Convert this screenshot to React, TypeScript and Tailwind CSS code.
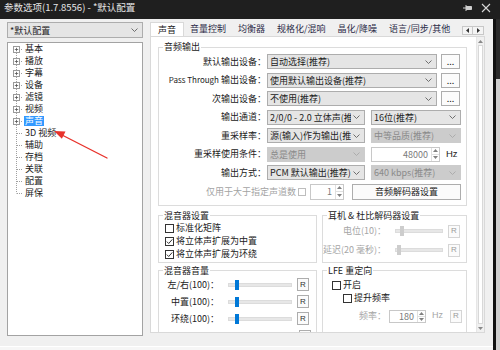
import React from 'react'

function Chevron({ off }: { off?: boolean }) {
  return (
    <svg width="7" height="4" viewBox="0 0 7 4" className="shrink-0">
      <path d="M0.5 0.5L3.5 3.5L6.5 0.5" fill="none" stroke={off ? '#a8a8a8' : '#606060'} strokeWidth="0.9" />
    </svg>
  )
}

function Select({ text, w, off }: { text: string; w: string; off?: boolean }) {
  return (
    <div className={`${w} h-[15px] shrink-0 flex items-center gap-[2px] pl-[2px] pr-[4px] border ${off ? 'bg-[#cccccc] border-[#cccccc] text-[#8a8a8a]' : 'bg-[#e5e5e5] border-[#adadad]'}`}>
      <span className="flex-1 overflow-hidden whitespace-nowrap leading-[13px]">{text}</span>
      <Chevron off={off} />
    </div>
  )
}

function Btn({ children, w, h }: { children: React.ReactNode; w: string; h: string }) {
  return (
    <div className={`${w} ${h} shrink-0 flex items-center justify-center border border-[#adadad] bg-[#fbfbfb] leading-none`}>
      {children}
    </div>
  )
}

function Spin({ v, w, h }: { v: string; w: string; h: string }) {
  return (
    <div className={`${w} ${h} shrink-0 flex border border-[#c8c8c8] bg-white`}>
      <span className="flex-1 self-center text-right pr-[3px] text-[#7a7a7a] leading-none">{v}</span>
      <div className="w-[8px] flex flex-col border-l border-[#e0e0e0]">
        <div className="flex-1 flex items-center justify-center border-b border-[#e0e0e0]">
          <svg width="5" height="3" viewBox="0 0 5 3"><path d="M0 3L2.5 0L5 3Z" fill="#808080" /></svg>
        </div>
        <div className="flex-1 flex items-center justify-center">
          <svg width="5" height="3" viewBox="0 0 5 3"><path d="M0 0L2.5 3L5 0Z" fill="#808080" /></svg>
        </div>
      </div>
    </div>
  )
}

function Check({ on }: { on?: boolean }) {
  return (
    <div className="w-[9px] h-[9px] shrink-0 border border-[#333] bg-white flex items-center justify-center">
      {on && (
        <svg width="7" height="7" viewBox="0 0 7 7">
          <path d="M0.8 3.6L2.7 5.5L6.3 1.4" fill="none" stroke="#333" strokeWidth="1" />
        </svg>
      )}
    </div>
  )
}

function Slider({ w, thumb, off }: { w: string; thumb: string; off?: boolean }) {
  return (
    <div className={`${w} h-[12px] shrink-0 relative flex items-center`}>
      <div className="w-full h-[4px] bg-[#e7e7e7] border border-[#dcdcdc]" />
      <div className={`absolute top-[1px] ${thumb} w-[4px] h-[10px] ${off ? 'bg-[#cdcdcd]' : 'bg-[#0078d7]'}`} />
    </div>
  )
}

function R({ off }: { off?: boolean }) {
  return (
    <div className={`w-[12px] h-[13px] shrink-0 flex items-center justify-center border bg-[#fbfbfb] text-[8px] leading-none font-['Liberation_Sans',sans-serif] ${off ? 'border-[#d5d5d5] text-[#9a9a9a]' : 'border-[#adadad] text-[#333]'}`}>
      R
    </div>
  )
}

function Group({ title, className, children }: { title: string; className: string; children: React.ReactNode }) {
  return (
    <fieldset className={`min-w-0 border border-[#dcdcdc] ${className}`}>
      <legend className="ml-[4px] px-[1px] leading-[12px]">{title}</legend>
      {children}
    </fieldset>
  )
}

const tree: { t: string; plus?: boolean; sel?: boolean }[] = [
  { t: '基本', plus: true },
  { t: '播放', plus: true },
  { t: '字幕', plus: true },
  { t: '设备', plus: true },
  { t: '滤镜', plus: true },
  { t: '视频', plus: true },
  { t: '声音', plus: true, sel: true },
  { t: '3D 视频' },
  { t: '辅助' },
  { t: '存档' },
  { t: '关联' },
  { t: '配置' },
  { t: '屏保' },
]

function TreeRow({ t, plus, sel, first, last }: { t: string; plus?: boolean; sel?: boolean; first: boolean; last: boolean }) {
  return (
    <div className="h-[12px] flex items-center">
      <svg width="16" height="12" viewBox="0 0 16 12" className="shrink-0">
        <path d={`M8.5 ${first ? 6 : 0}V${last ? 6.5 : 12}`} stroke="#a0a0a0" strokeDasharray="1 1" />
        <path d="M9 6.5H15" stroke="#a0a0a0" strokeDasharray="1 1" />
        {plus && (
          <>
            <rect x="5.5" y="3.5" width="6" height="6" fill="#fff" stroke="#9a9a9a" />
            <path d="M6.8 6.5H10.2M8.5 4.8V8.2" stroke="#555" strokeWidth="0.8" />
          </>
        )}
      </svg>
      <span className={`leading-[10px] whitespace-nowrap px-[1px] ${sel ? 'bg-[#3399ff] text-white' : ''}`}>{t}</span>
    </div>
  )
}

const tabs = ['音量控制', '均衡器', '规格化/混响', '晶化/降噪', '语言/同步/其他', 'Wi']

export default function App() {
  return (
    <div className="relative w-[500px] h-[350px] overflow-hidden flex flex-col bg-[#f0f0f0] text-[9px] text-[#222] font-['Noto_Sans_CJK_SC','Noto_Sans',sans-serif]">
      <div className="h-[19px] shrink-0 bg-[#1f1f1f] flex items-center pl-[4px] pr-[9px] text-[#e6e6e6]">
        <span className="flex-1 text-[9.5px] leading-none pb-[3px]">参数选项(1.7.8556) - *默认配置</span>
        <svg width="10" height="8" viewBox="0 0 10 8" className="mb-[3px] mr-[8px]">
          <path d="M0 4H3M3 1V7M3 2.5H8.5V5.5H3" fill="none" stroke="#cfcfcf" strokeWidth="1" />
          <rect x="3" y="2.5" width="5.5" height="3" fill="#cfcfcf" />
        </svg>
        <svg width="10" height="10" viewBox="0 0 10 10" className="mb-[3px]">
          <path d="M1 1L9 9M9 1L1 9" stroke="#d6d6d6" strokeWidth="1.1" />
        </svg>
      </div>
      <div className="flex-1 flex">
        <div className="w-[493px] flex flex-col">
          <div className="h-[317px] flex pt-[3px]">
            <div className="ml-[7px] w-[136px] flex flex-col">
              <div className="h-[16px] flex items-center pl-[2px] pr-[4px] border border-[#adadad] bg-[#e5e5e5]">
                <span className="flex-1 leading-none">*默认配置</span>
                <Chevron />
              </div>
              <div className="mt-[4px] flex-1 bg-white border border-[#a3a3a3]">
                {tree.map((r, i) => (
                  <TreeRow key={r.t} {...r} first={i === 0} last={i === tree.length - 1} />
                ))}
              </div>
            </div>
            <div className="ml-[7px] w-[335px] flex flex-col">
              <div className="h-[14px] flex">
                <div className="flex-1 flex overflow-hidden">
                  <div className="relative z-[1] h-[15px] shrink-0 px-[7px] flex items-center bg-white border-x border-t border-[#d9d9d9]">声音</div>
                  {tabs.map((t) => (
                    <div key={t} className="shrink-0 px-[6px] flex items-center whitespace-nowrap text-[#2c2c48]">{t}</div>
                  ))}
                </div>
                <div className="mt-[4px] mr-[1px] h-[9px] flex">
                  <div className="w-[11px] flex items-center justify-center border border-[#c8c8c8] bg-[#f4f4f4]">
                    <svg width="3" height="5" viewBox="0 0 3 5"><path d="M3 0L0 2.5L3 5Z" fill="#333" /></svg>
                  </div>
                  <div className="w-[11px] flex items-center justify-center border border-l-0 border-[#c8c8c8] bg-[#f4f4f4]">
                    <svg width="3" height="5" viewBox="0 0 3 5"><path d="M0 0L3 2.5L0 5Z" fill="#333" /></svg>
                  </div>
                </div>
              </div>
              <div className="h-[297px] flex border border-[#d9d9d9] bg-white overflow-hidden">
                <div className="w-[325px] pl-[7px] pr-[9px] pt-[4px]">
                  <Group title="音频输出" className="pb-[5px]">
                    <div className="mt-[1px] h-[15px] flex items-center">
                      <div className="w-[107px] shrink-0 text-right whitespace-nowrap">默认输出设备：</div>
                      <Select w="w-[170px] ml-[1px]" text="自动选择(推荐)" />
                      <Btn w="w-[19px] ml-[4px]" h="h-[15px]">...</Btn>
                    </div>
                    <div className="mt-[3.5px] h-[15px] flex items-center">
                      <div className="w-[107px] shrink-0 text-right whitespace-nowrap"><span className="text-[8px]">Pass Through</span> 输出设备：</div>
                      <Select w="w-[170px] ml-[1px]" text="使用默认输出设备(推荐)" />
                      <Btn w="w-[19px] ml-[4px]" h="h-[15px]">...</Btn>
                    </div>
                    <div className="mt-[3.5px] h-[15px] flex items-center">
                      <div className="w-[107px] shrink-0 text-right whitespace-nowrap">次输出设备：</div>
                      <Select w="w-[170px] ml-[1px]" text="不使用(推荐)" />
                      <Btn w="w-[19px] ml-[4px]" h="h-[15px]">...</Btn>
                    </div>
                    <div className="mt-[3.5px] h-[15px] flex items-center">
                      <div className="w-[107px] shrink-0 text-right whitespace-nowrap">输出通道：</div>
                      <Select w="w-[98px] ml-[1px]" text="2/0/0 - 2.0 立体声(推荐)" />
                      <Select w="w-[90px] ml-[6px]" text="16位(推荐)" />
                    </div>
                    <div className="mt-[3.5px] h-[15px] flex items-center">
                      <div className="w-[107px] shrink-0 text-right whitespace-nowrap">重采样率：</div>
                      <Select w="w-[98px] ml-[1px]" text="源(输入)作为输出(推荐)" />
                      <Select w="w-[90px] ml-[6px]" text="中等品质(推荐)" off />
                    </div>
                    <div className="mt-[3.5px] h-[15px] flex items-center">
                      <div className="w-[107px] shrink-0 text-right whitespace-nowrap">重采样使用条件：</div>
                      <Select w="w-[98px] ml-[1px]" text="总是使用" off />
                      <Spin v="48000" w="w-[69px] ml-[6px]" h="h-[15px]" />
                      <span className="ml-[6px] text-[9.5px] font-['Liberation_Sans',sans-serif]">Hz</span>
                    </div>
                    <div className="mt-[3.5px] h-[15px] flex items-center">
                      <div className="w-[107px] shrink-0 text-right whitespace-nowrap">输出方式：</div>
                      <Select w="w-[98px] ml-[1px]" text="PCM 默认输出(推荐)" />
                      <Select w="w-[90px] ml-[6px]" text="640 kbps(推荐)" off />
                    </div>
                    <div className="mt-[3.5px] h-[16px] flex items-center">
                      <div className="w-[137px] shrink-0 text-right whitespace-nowrap text-[#a3a3a3]">仅用于大于指定声道数</div>
                      <div className="ml-[2px] w-[8px] h-[8px] border border-[#bdbdbd] bg-white" />
                      <Spin v="1" w="w-[34px] ml-[4px]" h="h-[16px]" />
                      <Btn w="w-[109px] ml-[8px]" h="h-[16px]">音频解码器设置</Btn>
                    </div>
                  </Group>
                  <div className="mt-[4px] flex gap-[5px]">
                    <div className="w-[159px] shrink-0 flex flex-col">
                      <Group title="混音器设置" className="pb-[1px]">
                        <div className="h-[13px] pl-[6px] flex items-center gap-[2px]"><Check />标准化矩阵</div>
                        <div className="h-[13px] pl-[6px] flex items-center gap-[2px]"><Check on />将立体声扩展为中置</div>
                        <div className="h-[13px] pl-[6px] flex items-center gap-[2px]"><Check on />将立体声扩展为环绕</div>
                      </Group>
                      <Group title="混音器音量" className="mt-[2px] pb-[4px]">
                        {['左/右(100)：', '中置(100)：', '环绕(100)：'].map((l) => (
                          <div key={l} className="mb-[1px] h-[16px] flex items-center">
                            <div className="w-[60px] shrink-0 text-right whitespace-nowrap">{l}</div>
                            <Slider w="w-[64px] ml-[9px]" thumb="left-[7px]" />
                            <div className="ml-[5px]"><R /></div>
                          </div>
                        ))}
                        <div className="mt-[3px] h-[13px] flex justify-end pr-[5px]">
                          <R />
                        </div>
                      </Group>
                    </div>
                    <div className="w-[145px] shrink-0 flex flex-col">
                      <Group title="耳机 & 杜比解码器设置" className="pb-[5px]">
                        <div className="mt-[3px] h-[13px] flex items-center text-[#a6a6a6]">
                          <div className="w-[63px] shrink-0 text-right whitespace-nowrap">电位(10)：</div>
                          <Slider w="w-[48px] ml-[9px]" thumb="left-[5px]" off />
                          <div className="ml-[5px]"><R off /></div>
                        </div>
                        <div className="mt-[6px] h-[13px] flex items-center text-[#a6a6a6]">
                          <div className="w-[63px] shrink-0 text-right whitespace-nowrap">延迟(20 毫秒)：</div>
                          <Slider w="w-[48px] ml-[9px]" thumb="left-[2px]" off />
                          <div className="ml-[5px]"><R off /></div>
                        </div>
                      </Group>
                      <Group title="LFE 重定向" className="mt-[2px] pb-[10px]">
                        <div className="mt-[2px] h-[13px] pl-[9px] flex items-center gap-[2px]"><Check />开启</div>
                        <div className="h-[13px] pl-[20px] flex items-center gap-[2px]"><Check />提升频率</div>
                        <div className="mt-[5px] h-[13px] flex items-center text-[#a6a6a6]">
                          <div className="w-[63px] shrink-0 text-right whitespace-nowrap">频率：</div>
                          <Spin v="180" w="w-[37px] ml-[3px]" h="h-[13px]" />
                          <span className="ml-[6px] font-['Liberation_Sans',sans-serif]">Hz</span>
                          <div className="ml-[7px]"><R off /></div>
                        </div>
                      </Group>
                    </div>
                  </div>
                </div>
                <div className="w-[8px] flex flex-col bg-[#f0f0f0] border-l border-[#e6e6e6]">
                  <div className="h-[8px] flex items-center justify-center">
                    <svg width="5" height="3" viewBox="0 0 5 3"><path d="M0 3L2.5 0L5 3Z" fill="#888" /></svg>
                  </div>
                  <div className="flex-1 mx-[1px] bg-white border border-[#d8d8d8]" />
                  <div className="h-[8px] flex items-center justify-center">
                    <svg width="5" height="3" viewBox="0 0 5 3"><path d="M0 0L2.5 3L5 0Z" fill="#888" /></svg>
                  </div>
                </div>
              </div>
            </div>
          </div>
          <div className="h-[10px]" />
          <div className="flex-1 bg-[#f6f6f6] border-t border-white" />
        </div>
        <div className="w-[7px] flex">
          <div className="w-[3px] bg-[#111]" />
          <div className="flex-1 flex flex-col">
            <div className="h-[60px] bg-[#2b2b2b]" />
            <div className="flex-1 bg-[#cfcfcf]" />
          </div>
        </div>
      </div>
      <svg width="500" height="350" viewBox="0 0 500 350" className="absolute left-0 top-0 pointer-events-none">
        <path d="M107 158L62 135" stroke="#e8322b" strokeWidth="1.4" strokeLinecap="round" />
        <path d="M54 131L65.5 131.6L61.9 138.8Z" fill="#e8322b" />
      </svg>
    </div>
  )
}
